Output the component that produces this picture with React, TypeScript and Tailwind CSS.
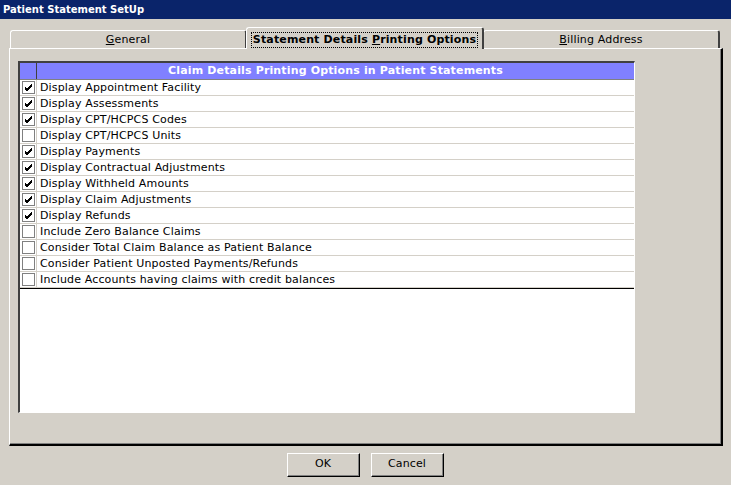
import React from 'react'

const rows: [string, boolean][] = [
  ['Display Appointment Facility', true],
  ['Display Assessments', true],
  ['Display CPT/HCPCS Codes', true],
  ['Display CPT/HCPCS Units', false],
  ['Display Payments', true],
  ['Display Contractual Adjustments', true],
  ['Display Withheld Amounts', true],
  ['Display Claim Adjustments', true],
  ['Display Refunds', true],
  ['Include Zero Balance Claims', false],
  ['Consider Total Claim Balance as Patient Balance', false],
  ['Consider Patient Unposted Payments/Refunds', false],
  ['Include Accounts having claims with credit balances', false],
]

const Check = ({ on }: { on: boolean }) => (
  <div className="w-[13px] h-[13px] border border-[#808080] bg-white flex items-center justify-center">
    {on && (
      <svg width="9" height="9" viewBox="0 0 9 9">
        <path d="M1 4 L3 6 L8 1 M1 5 L3 7 L8 2 M1 6 L3 8 L8 3" stroke="#000" strokeWidth="1" fill="none" shapeRendering="crispEdges" />
      </svg>
    )}
  </div>
)

const Tab = ({ label, u, rest, selected }: { label: string; u: string; rest: string; selected?: boolean }) => (
  <div
    className={
      selected
        ? 'w-[238px] h-[22px] -mx-[1px] z-10 pt-[2px] bg-[#d4d0c8] border-t border-l border-white border-r-2 border-r-[#404040] rounded-t-[3px] flex items-center justify-center font-bold'
        : 'w-[237px] h-[19px] pt-[2px] bg-[#d4d0c8] border-t border-l border-white border-b border-b-white border-r-2 border-r-[#404040] rounded-t-[3px] flex items-center justify-center'
    }
  >
    <span className={selected ? 'outline outline-1 outline-dotted outline-black px-[1px] leading-[14px]' : ''}>
      {label}
      <span className="underline">{u}</span>
      {rest}
    </span>
  </div>
)

export default function App() {
  return (
    <div className="w-[731px] h-[485px] bg-[#d4d0c8] flex flex-col text-[11px] tracking-[0.15px] text-black" style={{ fontFamily: '"DejaVu Sans", Verdana, sans-serif' }}>
      <div className="h-[20px] bg-[#0a246a] border-b border-[#d4d0c8] text-white font-bold text-[10px] tracking-normal leading-[19px] px-[3px]">
        Patient Statement SetUp
      </div>
      <div className="px-[9px] pt-[7px] flex flex-col">
        <div className="flex items-end pl-[1px] h-[22px]">
          <Tab label="" u="G" rest="eneral" />
          <Tab label="Statement Details " u="P" rest="rinting Options" selected />
          <Tab label="" u="B" rest="illing Address" />
        </div>
        <div className="w-[714px] h-[398px] border-l border-t border-white border-r-2 border-b-2 border-r-black border-b-black -mt-[1px]">
          <div className="w-full h-full border-r border-b border-[#808080] pl-[8px] pt-[12px]">
            <div className="w-[617px] h-[352px] border-t-2 border-l-2 border-t-[#404040] border-l-[#404040] border-b border-r border-b-white border-r-white bg-white flex flex-col">
              <div className="flex h-[17px] bg-[#8080ff] border-b border-[#808080] text-white font-bold">
                <div className="w-[17px] border-r border-[#404040]" />
                <div className="flex-1 text-center leading-[16px]">Claim Details Printing Options in Patient Statements</div>
              </div>
              {rows.map(([t, on]) => (
                <div key={t} className="flex h-[16px] border-b border-[#d4d0c8]">
                  <div className="w-[17px] flex items-center justify-center border-r border-[#d4d0c8]">
                    <Check on={on} />
                  </div>
                  <div className="flex-1 pl-[3px] leading-[15px]">{t}</div>
                </div>
              ))}
              <div className="h-[1px] bg-black" />
            </div>
          </div>
        </div>
      </div>
      <div className="flex justify-center gap-[11px] pt-[7px]">
        {['OK', 'Cancel'].map(b => (
          <div key={b} className="w-[73px] h-[24px] border-t border-l border-white border-r border-b border-r-black border-b-black">
            <div className="w-full h-full border-r border-b border-[#808080] flex items-center justify-center">{b}</div>
          </div>
        ))}
      </div>
    </div>
  )
}
